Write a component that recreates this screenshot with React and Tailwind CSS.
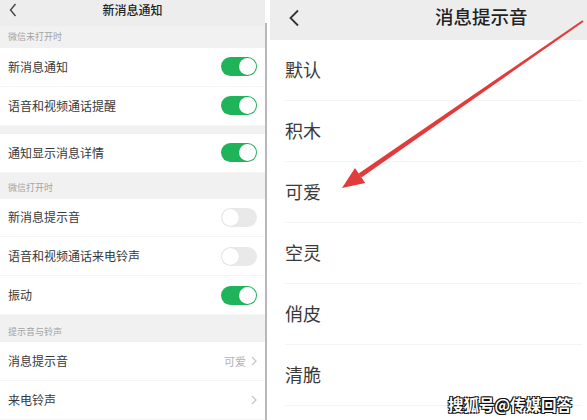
import React from 'react'

const font = { fontFamily: '"Noto Sans CJK SC", "Noto Sans", sans-serif' }

function Toggle({ on }) {
  return (
    <div className={`w-[36px] h-[19px] rounded-full flex items-center px-[1px] ${on ? 'bg-[#1fb35a] justify-end' : 'bg-[#e9e9e9] justify-start'}`}>
      <div className="w-[17px] h-[17px] rounded-full bg-white shadow-[0_0_1px_rgba(0,0,0,0.15)]" />
    </div>
  )
}

function Section({ title, h }) {
  return (
    <div className={`${h} bg-[#f1f1f1] flex items-end pl-[8px] pb-[4px] text-[9px] text-[#a3a3a3]`}>
      {title}
    </div>
  )
}

function Row({ label, on, value, arrow }) {
  return (
    <div className="h-[39px] bg-white flex items-center justify-between pl-[8px] pr-[8px] border-b border-[#f5f5f5]">
      <span className="text-[12px] text-[#383838]">{label}</span>
      {arrow ? (
        <span className="flex items-center gap-[5px] text-[11px] text-[#b0b0b0]">
          {value}
          <svg width="6" height="10" viewBox="0 0 6 10" fill="none">
            <path d="M1 1l4 4-4 4" stroke="#c4c4c4" strokeWidth="1.2" />
          </svg>
        </span>
      ) : (
        <Toggle on={on} />
      )}
    </div>
  )
}

const sounds = ['默认', '积木', '可爱', '空灵', '俏皮', '清脆']

export default function App() {
  return (
    <div className="relative w-[587px] h-[420px] overflow-hidden bg-white flex" style={font}>
      {/* left screen */}
      <div className="w-[265px] flex flex-col">
        <div className="h-[26px] bg-[#ededed] flex items-center relative">
          <svg className="absolute left-[9px] top-[3px]" width="8" height="14" viewBox="0 0 8 14" fill="none">
            <path d="M6.5 1L1.5 7l5 6" stroke="#444" strokeWidth="1.4" />
          </svg>
          <div className="w-full text-center text-[12px] text-[#222] font-medium -mt-[6px]">新消息通知</div>
        </div>
        <Section title="微信未打开时" h="h-[22px]" />
        <Row label="新消息通知" on />
        <Row label="语音和视频通话提醒" on />
        <div className="h-[8px] bg-[#f1f1f1]" />
        <Row label="通知显示消息详情" on />
        <Section title="微信打开时" h="h-[26px]" />
        <Row label="新消息提示音" />
        <Row label="语音和视频通话来电铃声" />
        <Row label="振动" on />
        <Section title="提示音与铃声" h="h-[27px]" />
        <Row label="消息提示音" value="可爱" arrow />
        <Row label="来电铃声" arrow />
      </div>
      <div className="w-[2px] mt-[23px] bg-[#b8b8b8]" />
      <div className="w-[3px]" />

      {/* right screen */}
      <div className="flex-1 flex flex-col">
        <div className="h-[40px] bg-[#ededed] flex items-center relative">
          <svg className="absolute left-[18px] top-[9px]" width="12" height="18" viewBox="0 0 12 18" fill="none">
            <path d="M10 1.5L2.5 9l7.5 7.5" stroke="#333" strokeWidth="1.8" />
          </svg>
          <div className="ml-[165px] text-[18.5px] text-[#222] font-medium -mt-[6px]">消息提示音</div>
        </div>
        {sounds.map((s) => (
          <div key={s} className="h-[61px] flex items-center pl-[15px] pr-[5px]">
            <div className="flex-1 h-full flex items-center border-b border-[#f4f4f4] text-[18px] text-[#3a3a3a] -mt-[1px]">
              {s}
            </div>
          </div>
        ))}
      </div>

      {/* red arrow */}
      <svg className="absolute left-0 top-0 pointer-events-none" width="587" height="420" viewBox="0 0 587 420">
        <polygon points="583.6,21.8 582.4,20.2 358.6,173.4 361.4,177.6" fill="#e23b3b" />
        <polygon points="342,188 365.2,182.9 355,168.1" fill="#e23b3b" />
      </svg>

      {/* watermark */}
      <div className="absolute left-[448px] top-[393px] text-[15.5px] font-bold text-white [text-shadow:1px_1px_0_#111,-1px_-1px_0_#111,1px_-1px_0_#111,-1px_1px_0_#111]">
        搜狐号@传媒回答
      </div>
    </div>
  )
}
